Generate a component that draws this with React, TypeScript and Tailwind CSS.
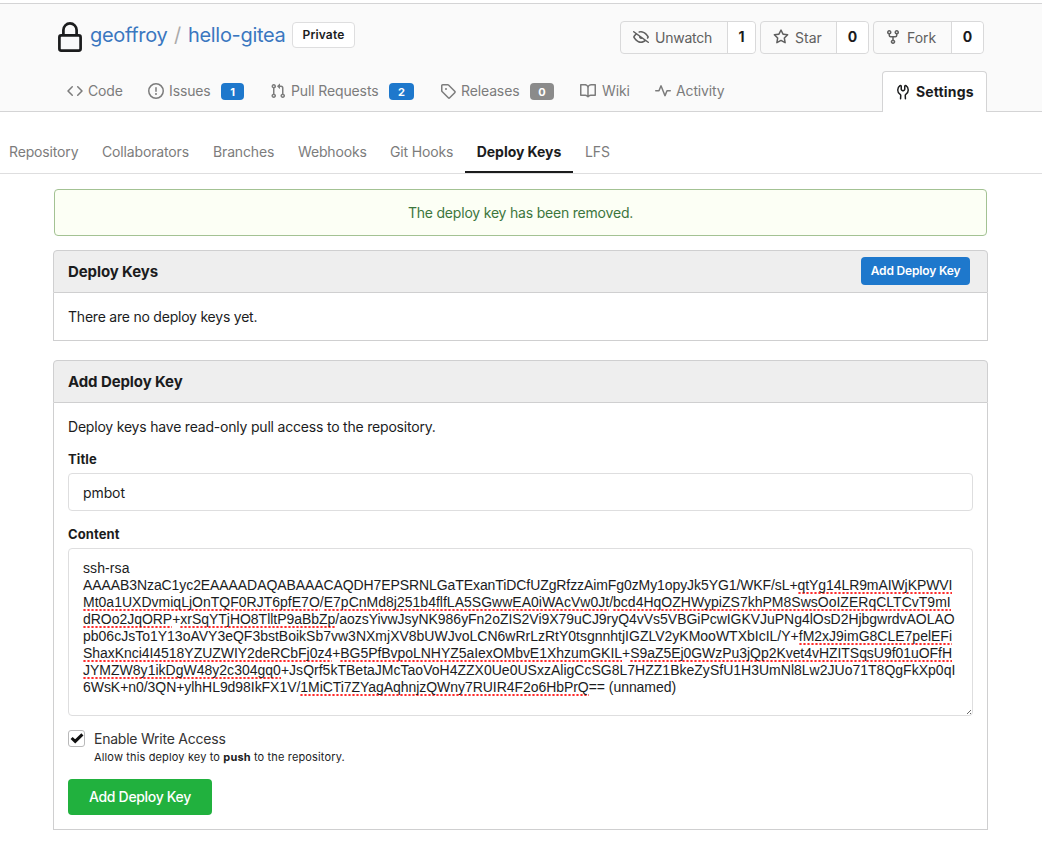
import type { ReactNode } from "react";

const paths = {
  code: "M4.72 3.22a.75.75 0 011.06 1.06L2.06 8l3.72 3.72a.75.75 0 11-1.06 1.06L.47 8.53a.75.75 0 010-1.06l4.25-4.25zm6.56 0a.75.75 0 10-1.06 1.06L13.94 8l-3.72 3.72a.75.75 0 101.06 1.06l4.25-4.25a.75.75 0 000-1.06l-4.25-4.25z",
  issue: "M8 1.5a6.5 6.5 0 100 13 6.5 6.5 0 000-13zM0 8a8 8 0 1116 0A8 8 0 010 8zm9 3a1 1 0 11-2 0 1 1 0 012 0zm-.25-6.25a.75.75 0 00-1.5 0v3.5a.75.75 0 001.5 0v-3.5z",
  pull: "M7.177 3.073L9.573.677A.25.25 0 0110 .854v4.792a.25.25 0 01-.427.177L7.177 3.427a.25.25 0 010-.354zM3.75 2.5a.75.75 0 100 1.5.75.75 0 000-1.5zm-2.25.75a2.25 2.25 0 113 2.122v5.256a2.251 2.251 0 11-1.5 0V5.372A2.25 2.25 0 011.5 3.25zM11 2.5h-1V4h1a1 1 0 011 1v5.628a2.251 2.251 0 101.5 0V5A2.5 2.5 0 0011 2.5zm1 10.25a.75.75 0 111.5 0 .75.75 0 01-1.5 0zM3.75 12a.75.75 0 100 1.5.75.75 0 000-1.5z",
  tag: "M2.5 7.775V2.75a.25.25 0 01.25-.25h5.025a.25.25 0 01.177.073l6.25 6.25a.25.25 0 010 .354l-5.025 5.025a.25.25 0 01-.354 0l-6.25-6.25a.25.25 0 01-.073-.177zm-1.5 0V2.75C1 1.784 1.784 1 2.75 1h5.025c.464 0 .91.184 1.238.513l6.25 6.25a1.75 1.75 0 010 2.474l-5.026 5.026a1.75 1.75 0 01-2.474 0l-6.25-6.25A1.75 1.75 0 011 7.775zM6 5a1 1 0 100 2 1 1 0 000-2z",
  book: "M0 1.75A.75.75 0 01.75 1h4.253c1.227 0 2.317.59 3 1.501A3.744 3.744 0 0111.006 1h4.245a.75.75 0 01.75.75v10.5a.75.75 0 01-.75.75h-4.507a2.25 2.25 0 00-1.591.659l-.622.621a.75.75 0 01-1.06 0l-.622-.621A2.25 2.25 0 005.258 13H.75a.75.75 0 01-.75-.75V1.75zm8.755 3a2.25 2.25 0 012.25-2.25H14.5v9h-3.757c-.71 0-1.4.201-1.992.572l.004-7.322zm-1.504 7.324l.004-5.073-.002-2.253A2.25 2.25 0 005.003 2.5H1.5v9h3.757a3.75 3.75 0 011.994.574z",
  pulse: "M6 2a.75.75 0 01.696.471L10 10.731l1.304-3.26A.75.75 0 0112 7h3.25a.75.75 0 010 1.5h-2.742l-1.812 4.528a.75.75 0 01-1.392 0L6 4.77 4.696 8.03A.75.75 0 014 8.5H.75a.75.75 0 010-1.5h2.742l1.812-4.529A.75.75 0 016 2z",
  tools: "M5.433 2.304A4.494 4.494 0 003.5 6c0 1.598.832 3.002 2.09 3.802.518.328.929.923.902 1.64v.008l-.164 3.337a.75.75 0 11-1.498-.073l.163-3.33c.002-.085-.05-.216-.207-.316A5.996 5.996 0 012 6a5.994 5.994 0 012.567-4.92 1.482 1.482 0 011.673-.04c.462.296.76.827.76 1.423v2.82c0 .082.041.16.11.206l.75.51a.25.25 0 00.28 0l.75-.51A.25.25 0 009 5.282V2.463c0-.596.298-1.127.76-1.423a1.482 1.482 0 011.673.04A5.994 5.994 0 0114 6a5.996 5.996 0 01-2.786 5.068c-.157.1-.209.23-.207.315l.163 3.33a.75.75 0 11-1.498.074l-.164-3.345c-.027-.717.384-1.312.902-1.64A4.496 4.496 0 0012.5 6a4.494 4.494 0 00-1.933-3.696c-.024.017-.067.067-.067.16v2.818a1.75 1.75 0 01-.767 1.448l-.75.51a1.75 1.75 0 01-1.966 0l-.75-.51A1.75 1.75 0 015.5 5.282V2.463c0-.092-.043-.142-.067-.159z",
  eyeClosed: "M.143 2.31a.75.75 0 011.047-.167l14.5 10.5a.75.75 0 11-.88 1.214l-2.248-1.628C11.346 13.19 9.792 14 8 14c-1.981 0-3.67-.992-4.933-2.078C1.797 10.832.88 9.577.43 8.9a1.618 1.618 0 010-1.797c.353-.533.995-1.42 1.868-2.305L.31 3.357A.75.75 0 01.143 2.31zm3.386 3.378a14.21 14.21 0 00-1.85 2.244.12.12 0 00-.022.068c0 .021.006.045.022.068.412.621 1.242 1.75 2.366 2.717C5.175 11.758 6.527 12.5 8 12.5c1.195 0 2.31-.488 3.29-1.191L9.063 9.695A2 2 0 016.058 7.52l-2.53-1.832zM8 3.5c-.516 0-1.017.09-1.499.251a.75.75 0 11-.473-1.423A6.23 6.23 0 018 2c1.981 0 3.67.992 4.933 2.078 1.27 1.091 2.187 2.345 2.637 3.023a1.619 1.619 0 010 1.798c-.11.166-.248.365-.41.587a.75.75 0 11-1.21-.887c.148-.201.272-.382.371-.53a.119.119 0 000-.137c-.412-.621-1.242-1.75-2.366-2.717C10.825 4.242 9.473 3.5 8 3.5z",
  star: "M8 .25a.75.75 0 01.673.418l1.882 3.815 4.21.612a.75.75 0 01.416 1.279l-3.046 2.97.719 4.192a.75.75 0 01-1.088.791L8 12.347l-3.766 1.98a.75.75 0 01-1.088-.79l.72-4.194L.818 6.374a.75.75 0 01.416-1.28l4.21-.611L7.327.668A.75.75 0 018 .25zm0 2.445L6.615 5.5a.75.75 0 01-.564.41l-3.097.45 2.24 2.184a.75.75 0 01.216.664l-.528 3.084 2.769-1.456a.75.75 0 01.698 0l2.77 1.456-.53-3.084a.75.75 0 01.216-.664l2.24-2.183-3.096-.45a.75.75 0 01-.564-.41L8 2.694v.001z",
  fork: "M5 3.25a.75.75 0 11-1.5 0 .75.75 0 011.5 0zm0 2.122a2.25 2.25 0 10-1.5 0v.878A2.25 2.25 0 005.75 8.5h1.5v2.128a2.251 2.251 0 101.5 0V8.5h1.5a2.25 2.25 0 002.25-2.25v-.878a2.25 2.25 0 10-1.5 0v.878a.75.75 0 01-.75.75h-4.5A.75.75 0 015 6.25v-.878zm3.75 7.378a.75.75 0 11-1.5 0 .75.75 0 011.5 0zm3-8.75a.75.75 0 100-1.5.75.75 0 000 1.5z",
};

function Icon({ name, className = "" }: { name: keyof typeof paths; className?: string }) {
  return (
    <svg viewBox="0 0 16 16" className={`size-4 shrink-0 fill-current ${className}`}>
      <path fillRule="evenodd" d={paths[name]} />
    </svg>
  );
}

function CountButton({ icon, label, count, left, right }: { icon: keyof typeof paths; label: string; count: string; left: string; right: string }) {
  return (
    <div className="flex h-[33px] rounded border border-[#d9d9da]">
      <div className={`flex items-center pt-px text-[#606060] ${left}`}>
        <Icon name={icon} className="mr-[6px] -translate-y-px" />
        {label}
      </div>
      <div className={`flex items-center justify-center rounded-r border-l border-[#d9d9da] bg-white pb-px font-bold text-[#1b1c1d] ${right}`}>{count}</div>
    </div>
  );
}

function Tab({ icon, width, children }: { icon: keyof typeof paths; width: string; children: ReactNode }) {
  return (
    <a className={`flex h-[40px] items-center tracking-[-0.13px] text-[#7c7c7c] ${width}`}>
      <Icon name={icon} className="mr-[5px]" />
      {children}
    </a>
  );
}

function Badge({ className, children }: { className: string; children: ReactNode }) {
  return <span className={`mt-px flex h-[17px] items-center justify-center rounded text-[11px] font-bold text-white ${className}`}>{children}</span>;
}

function Misspelt({ children }: { children: ReactNode }) {
  return (
    <span className="bg-[linear-gradient(90deg,#ff8080_0.5px,#ff2d2d_1px,#ff2d2d_2px,#ff8080_2.5px,transparent_3px)] bg-[length:4px_2px] bg-[position:0_100%] bg-repeat-x pb-px">{children}</span>
  );
}

const settingsNav = [
  { label: "Repository", width: "w-[93px]" },
  { label: "Collaborators", width: "w-[111px]" },
  { label: "Branches", width: "w-[85px]" },
  { label: "Webhooks", width: "w-[92px]" },
  { label: "Git Hooks", width: "w-[75px]" },
];

export default function App() {
  return (
    <div className="h-[865px] w-[1042px] overflow-hidden bg-white font-[Inter,sans-serif] text-[14px] leading-5 text-[#1b1c1d]">
      <header className="mt-[3px] h-[109px] border-y border-[#d4d4d5] bg-[#fafafa]">
        <div className="flex h-[67px] items-start pl-[54px]">
          <svg viewBox="0 0 32 32" className="mt-[17px] size-8 shrink-0 fill-none stroke-[#1b1c1d] stroke-[2.7]">
            <rect x="5.4" y="14.4" width="21.2" height="15.2" rx="1.8" />
            <path d="M9.4 14V9a6.6 6.6 0 0113.2 0v5" />
          </svg>
          <div className="mt-[17px] flex pl-[4px] text-[20px] leading-7 tracking-[-0.32px] text-[#3a77c0]">
            <a className="w-[84px]">geoffroy</a>
            <span className="w-[14px] text-[#aaa]">/</span>
            <a className="w-[104px]">hello-gitea</a>
          </div>
          <span className="mt-[18px] flex h-[26px] w-[63px] items-center justify-center rounded border border-[#dededf] bg-white text-[12px] font-semibold tracking-[0.15px]">Private</span>
          <div className="ml-auto mr-[58px] mt-[17px] flex gap-1">
            <CountButton icon="eyeClosed" label="Unwatch" count="1" left="w-[106px] pl-[12px] tracking-[-0.25px]" right="w-[28px]" />
            <CountButton icon="star" label="Star" count="0" left="w-[75px] pl-[12px]" right="w-[32px]" />
            <CountButton icon="fork" label="Fork" count="0" left="w-[77px] pl-[11px]" right="w-[32px]" />
          </div>
        </div>
        <nav className="flex h-[41px] pl-[67px]">
          <Tab icon="code" width="w-[81px]">Code</Tab>
          <Tab icon="issue" width="w-[122px]">Issues<Badge className="ml-auto mr-[26px] w-[23px] bg-[#1e78cc]">1</Badge></Tab>
          <Tab icon="pull" width="w-[170px]">Pull Requests<Badge className="ml-auto mr-[26px] w-[25px] bg-[#1e78cc]">2</Badge></Tab>
          <Tab icon="tag" width="w-[140px]">Releases<Badge className="ml-auto mr-[26px] w-[24px] bg-[#8b8b8b]">0</Badge></Tab>
          <Tab icon="book" width="w-[75px]"><span className="pl-px">Wiki</span></Tab>
          <Tab icon="pulse" width="w-[90px]">Activity</Tab>
          <a className="ml-auto mr-[55px] flex h-[41px] w-[105px] items-center rounded-t border border-b-0 border-[#d4d4d5] bg-white pl-[12px] font-bold tracking-[0.15px]">
            <Icon name="tools" className="mr-[5px]" />
            Settings
          </a>
        </nav>
      </header>

      <nav className="flex h-[62px] items-stretch border-b border-[#dededf] pl-[9px] pt-[19px] tracking-[-0.15px] text-[#7c7c7c]">
        {settingsNav.map((item) => (
          <a key={item.label} className={`flex h-[42px] items-center whitespace-nowrap ${item.width}`}>{item.label}</a>
        ))}
        <a className="flex h-[42px] w-[108px] items-center justify-center border-b-2 border-[#1b1c1d] pt-[2px] font-bold tracking-[-0.05px] text-[#1b1c1d]">Deploy Keys</a>
        <a className="flex h-[42px] items-center pl-[12px]">LFS</a>
      </nav>

      <main className="ml-[53px] w-[935px] pt-[15px]">
        <div className="mx-px flex h-[47px] items-center justify-center rounded border border-[#a3c293] bg-[#fcfff5] tracking-[-0.2px] text-[#3c763d]">The deploy key has been removed.</div>

        <section className="mt-[14px]">
          <h4 className="flex h-[43px] items-center justify-between rounded-t border border-[#cfcfd0] bg-[#eeeeee] pl-[14px] pr-[17px] text-[15px] font-bold tracking-[-0.1px]">
            Deploy Keys
            <button className="mb-px h-[28px] w-[109px] rounded bg-[#1e78cc] text-[12px] font-semibold tracking-[-0.17px] text-white">Add Deploy Key</button>
          </h4>
          <div className="flex h-[48px] items-center border border-t-0 border-[#cfcfd0] pl-[14px] tracking-[-0.22px]">There are no deploy keys yet.</div>
        </section>

        <section className="mt-[19px]">
          <h4 className="flex h-[43px] items-center rounded-t border border-[#cfcfd0] bg-[#eeeeee] pl-[14px] text-[15px] font-bold tracking-[-0.1px]">Add Deploy Key</h4>
          <div className="h-[427px] border border-t-0 border-[#cfcfd0] px-[14px] pt-[14px]">
            <p className="tracking-[-0.2px]">Deploy keys have read-only pull access to the repository.</p>
            <div className="mt-[12px] text-[13px] font-bold leading-5 tracking-[0.1px]">Title</div>
            <div className="mt-[4px] flex h-[38px] items-center rounded border border-[#dededf] px-[14px] pt-[2px] tracking-[-0.1px]">pmbot</div>
            <div className="mt-[13px] text-[13px] font-bold leading-5 tracking-[0.1px]">Content</div>
            <div className="relative mt-[4px] h-[168px] rounded border border-[#dededf] px-[14px] pt-[11px] font-['Liberation_Sans',Arial,sans-serif] leading-[17px] whitespace-pre">
              <div className="tracking-[0.1px]">ssh-rsa</div>
              <div className="tracking-[-0.086px]">AAAAB3NzaC1yc2EAAAADAQABAAACAQDH7EPSRNLGaTExanTiDCfUZgRfzzAimFg0zMy1opyJk5YG1/WKF/sL+<Misspelt>qtYg14LR9mAIWjKPWVI</Misspelt></div>
              <div className="tracking-[0.01px]"><Misspelt>Mt0a1UXDvmiqLjOnTQF0RJT6pfE7O</Misspelt>/<Misspelt>E7pCnMd8j251b4flfLA5SGwwEA0iWAcVw0Jt</Misspelt>/<Misspelt>bcd4HqOZHWypiZS7khPM8SwsOoIZERqCLTCvT9mI</Misspelt></div>
              <div className="tracking-[-0.03px]"><Misspelt>dROo2JqORP</Misspelt>+<Misspelt>xrSqYTjHO8TlltP9aBbZp</Misspelt>/aozsYivwJsyNK986yFn2oZIS2Vi9X79uCJ9ryQ4vVs5VBGiPcwIGKVJuPNg4lOsD2HjbgwrdvAOLAO</div>
              <div>pb06cJsTo1Y13oAVY3eQF3bstBoikSb7vw3NXmjXV8bUWJvoLCN6wRrLzRtY0tsgnnhtjIGZLV2yKMooWTXbIcIL/Y+<Misspelt>fM2xJ9imG8CLE7pelEFi</Misspelt></div>
              <div className="tracking-[-0.045px]"><Misspelt>ShaxKnci4I4518YZUZWIY2deRCbFj0z4</Misspelt>+<Misspelt>BG5PfBvpoLNHYZ5aIexOMbvE1XhzumGKIL</Misspelt>+<Misspelt>S9aZ5Ej0GWzPu3jQp2Kvet4vHZITSqsU9f01uOFfH</Misspelt></div>
              <div className="tracking-[0.012px]"><Misspelt>JYMZW8y1ikDgW48y2c304gq0</Misspelt>+JsQrf5kTBetaJMcTaoVoH4ZZX0Ue0USxzAligCcSG8L7HZZ1BkeZySfU1H3UmNl8Lw2JUo71T8QgFkXp0qI</div>
              <div className="tracking-[-0.05px]">6WsK+n0/3QN+ylhHL9d98IkFX1V/<Misspelt>1MiCTi7ZYagAqhnjzQWny7RUIR4F2o6HbPrQ</Misspelt>== (unnamed)</div>
              <svg viewBox="0 0 6 6" className="absolute bottom-0 right-0 size-[6px] fill-none stroke-[#444] stroke-[0.8]">
                <path d="M1 5L5 1M4 5L5 4" />
              </svg>
            </div>
            <div className="mt-[13px] flex">
              <span className="mt-px flex size-[17px] items-center justify-center rounded-[3px] border border-[#b9b9ba]">
                <svg viewBox="0 0 14 12" className="mb-px h-[12px] w-[14px] shrink-0 fill-none stroke-[#111] stroke-[3]">
                  <path d="M1.6 6l3.6 3.4L12.4 2.4" />
                </svg>
              </span>
              <div className="ml-[9px]">
                <div className="text-[14px] leading-5 tracking-[-0.23px] text-[#333]">Enable Write Access</div>
                <div className="text-[11px] leading-4 tracking-[0.145px]">Allow this deploy key to <b>push</b> to the repository.</div>
              </div>
            </div>
            <button className="mt-[14px] h-[36px] w-[144px] rounded bg-[#21b13e] text-[14px] font-medium tracking-[-0.32px] text-white">Add Deploy Key</button>
          </div>
        </section>
      </main>
    </div>
  );
}
